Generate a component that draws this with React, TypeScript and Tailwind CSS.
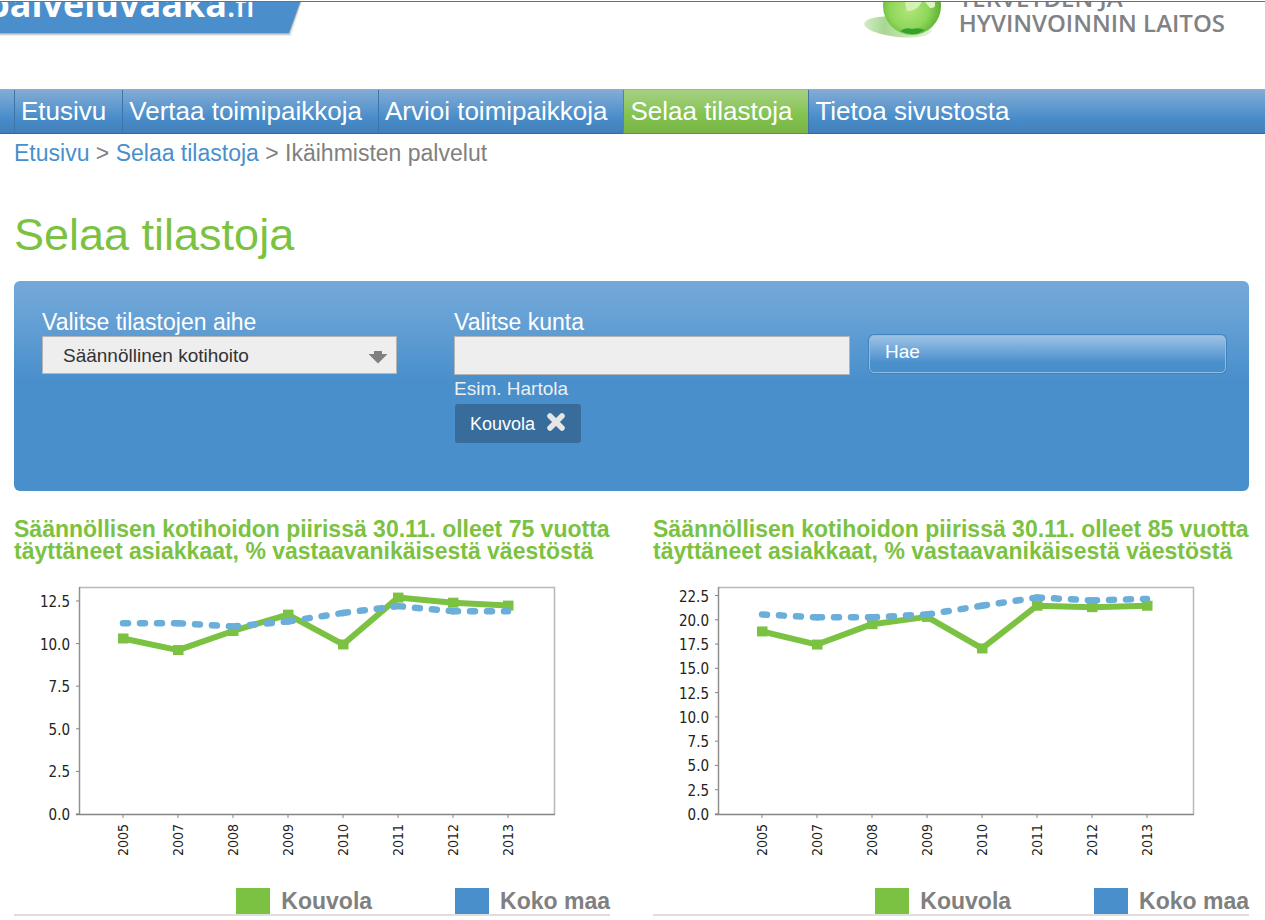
import type { ReactNode } from "react";

const NAV = [
  { label: "Etusivu" },
  { label: "Vertaa toimipaikkoja" },
  { label: "Arvioi toimipaikkoja" },
  { label: "Selaa tilastoja", active: true },
  { label: "Tietoa sivustosta" },
];

const YEARS = ["2005", "2007", "2008", "2009", "2010", "2011", "2012", "2013"];

type ChartData = {
  title: string;
  ticks: number[];
  unit: number;
  kouvola: number[];
  country: number[];
};

const CHARTS: ChartData[] = [
  {
    title:
      "Säännöllisen kotihoidon piirissä 30.11. olleet 75 vuotta täyttäneet asiakkaat, % vastaavanikäisestä väestöstä",
    ticks: [0, 2.5, 5, 7.5, 10, 12.5],
    unit: 17.04,
    kouvola: [10.3, 9.62, 10.74, 11.7, 9.95, 12.7, 12.4, 12.23],
    country: [11.2, 11.2, 11, 11.3, 11.8, 12.2, 11.9, 11.9],
  },
  {
    title:
      "Säännöllisen kotihoidon piirissä 30.11. olleet 85 vuotta täyttäneet asiakkaat, % vastaavanikäisestä väestöstä",
    ticks: [0, 2.5, 5, 7.5, 10, 12.5, 15, 17.5, 20, 22.5],
    unit: 9.71,
    kouvola: [18.8, 17.45, 19.55, 20.3, 17.05, 21.45, 21.3, 21.45],
    country: [20.55, 20.25, 20.25, 20.55, 21.45, 22.3, 22, 22.15],
  },
];

const BASE = 236;
const xAt = (i: number) => 109 + i * 55;

function LineChart({ data }: { data: ChartData }) {
  const yAt = (v: number) => BASE - v * data.unit;
  return (
    <svg
      viewBox="0 0 596 290"
      role="img"
      aria-label={data.title}
      className="mt-4 block w-full font-['DejaVu_Sans_Condensed','DejaVu_Sans',sans-serif]"
    >
      <path d="M65 9.5H540.5V236" fill="none" stroke="#b9b9b9" strokeWidth="1.5" />
      <path d="M65.5 9V236" fill="none" stroke="#909090" strokeWidth="1.5" />
      <path d="M62 236.5H541" fill="none" stroke="#858585" strokeWidth="1.5" />
      {data.ticks.map((t) => (
        <g key={t}>
          <path d={`M62 ${yAt(t)}H65`} stroke="#858585" />
          <text x="56" y={yAt(t) + 6} textAnchor="end" fill="#222" className="text-[15px]">
            {t.toFixed(1)}
          </text>
        </g>
      ))}
      {YEARS.map((year, i) => (
        <g key={year}>
          <path d={`M${xAt(i)} 237v3`} stroke="#858585" />
          <text
            transform={`translate(${xAt(i) + 5} 278) rotate(-90)`}
            fill="#222"
            className="text-[14px]"
          >
            {year}
          </text>
        </g>
      ))}
      <polyline
        points={data.kouvola.map((v, i) => `${xAt(i)},${yAt(v)}`).join(" ")}
        fill="none"
        stroke="#7cc242"
        strokeWidth="6"
        strokeLinejoin="round"
      />
      {data.kouvola.map((v, i) => (
        <rect
          key={i}
          x={xAt(i) - 5}
          y={yAt(v) - 5}
          width="10.5"
          height="10"
          fill="#7cc242"
        />
      ))}
      {data.country.slice(1).map((v, i) => (
        <path
          key={i}
          d={`M${xAt(i)} ${yAt(data.country[i])}L${xAt(i + 1)} ${yAt(v)}`}
          stroke="#6baed9"
          strokeWidth="6.5"
          strokeLinecap="round"
          strokeDasharray="5 12"
        />
      ))}
    </svg>
  );
}

function LegendItem({ swatch, children }: { swatch: string; children: ReactNode }) {
  return (
    <li className="flex items-center gap-[11px]">
      <span className={`h-[26px] w-[34px] ${swatch}`} />
      {children}
    </li>
  );
}

function ThlLogo() {
  return (
    <svg viewBox="0 0 84 44" className="h-[44px] w-[84px] shrink-0" aria-hidden="true">
      <defs>
        <radialGradient id="ball" cx="0.45" cy="0.55" r="0.55">
          <stop offset="0" stopColor="#b2e67c" />
          <stop offset="0.6" stopColor="#8fd75a" />
          <stop offset="1" stopColor="#5cb033" />
        </radialGradient>
        <linearGradient id="shade" x1="0" x2="1">
          <stop offset="0" stopColor="#d3ecc4" />
          <stop offset="0.3" stopColor="#a8d792" />
          <stop offset="1" stopColor="#e4f3d9" />
        </linearGradient>
      </defs>
      <ellipse cx="35" cy="25" rx="34" ry="10" fill="url(#shade)" transform="rotate(6 35 25)" />
      <circle cx="49" cy="4" r="29" fill="url(#ball)" />
      <path d="M42 0l2 9q8 0 12-5l3-4z" fill="#d5f1b4" />
      <path d="M62 0l5 6q4 0 5-2V0z" fill="#dcf4c2" />
      <path d="M37 29q6-4 12-2 7-2 13 1-12 8-25 1z" fill="#35a030" />
    </svg>
  );
}

export default function App() {
  return (
    <div className="min-h-screen bg-white font-['Liberation_Sans',Arial,sans-serif] text-[23px] text-[#808080]">
      <header className="mt-px flex h-[88px] items-start justify-between overflow-hidden border-t border-[#6f6f6f] pr-10">
        <a
          href="#"
          className="relative block h-[38px] w-[304px] font-['Open_Sans',sans-serif] text-[36px] leading-[36px] font-bold text-white"
        >
          <svg viewBox="0 0 304 38" className="absolute inset-0" aria-hidden="true">
            <path d="M0 0H302L291 34H0z" fill="#000" opacity="0.07" />
            <path d="M0 0H301L290 33H0z" fill="#000" opacity="0.12" />
            <path d="M0 0H301L289 32H0z" fill="#000" opacity="0.15" />
            <path d="M0 0H300L289 31H0z" fill="#4a8fcc" />
          </svg>
          <span className="absolute -top-4 -left-[13px] whitespace-nowrap">
            palveluvaaka<span className="text-[30px] font-semibold">.fi</span>
          </span>
        </a>
        <div className="flex items-start gap-3">
          <ThlLogo />
          <p className="-mt-[17px] font-['Open_Sans',sans-serif] text-[24px] leading-[25px] font-semibold text-[#808285]">
            TERVEYDEN JA
            <br />
            HYVINVOINNIN LAITOS
          </p>
        </div>
      </header>

      <nav className="border-t border-b border-t-[#8db0d2] border-b-[#33699d] bg-linear-to-b from-[#82acd4] via-[#488dca] via-65% to-[#427fb9] pl-[14px]">
        <ul className="flex text-[26px] leading-[43px] text-white">
          {NAV.map((item) => (
            <li
              key={item.label}
              className={
                item.active
                  ? "-mb-px border-b border-l border-b-[#5f9435] border-l-[#5f8f52] bg-linear-to-b from-[#a7d083] via-[#82c34d] via-60% to-[#79b447]"
                  : "border-l border-[#3d74a9]"
              }
            >
              <a
                href="#"
                aria-current={item.active ? "page" : undefined}
                className="block pr-4 pl-[6px] whitespace-nowrap"
              >
                {item.label}
              </a>
            </li>
          ))}
        </ul>
      </nav>

      <main className="pr-4 pl-[14px]">
        <p className="pt-[5px] leading-7">
          <a href="#" className="text-[#488fcd]">Etusivu</a> &gt;{" "}
          <a href="#" className="text-[#488fcd]">Selaa tilastoja</a> &gt; Ikäihmisten palvelut
        </p>

        <h1 className="mt-[42px] text-[45px] leading-[52px] text-[#7cc242]">Selaa tilastoja</h1>

        <form
          onSubmit={(e) => e.preventDefault()}
          className="mt-5 grid min-h-[210px] grid-cols-[412fr_415fr_357fr] rounded-md bg-[#488fcc] bg-[linear-gradient(#74a8d9,#6aa3d6_28px,#488fcc_100px)] pt-[27px] pr-[23px] pl-7 text-white"
        >
          <div className="pr-[57px]">
            <label htmlFor="topic" className="block leading-7">Valitse tilastojen aihe</label>
            <div className="relative">
              <select
                id="topic"
                className="block h-[38px] w-full appearance-none border border-[#b5b5b5] bg-[#eee] pt-0.5 pl-5 text-[19px] text-[#333]"
              >
                <option>Säännöllinen kotihoito</option>
              </select>
              <svg
                viewBox="0 0 20 14"
                className="pointer-events-none absolute top-[14px] right-[9px] h-[14px] w-5"
                aria-hidden="true"
              >
                <path d="M6 1h8v3h5.500L10 13.500.5 4H6z" fill="#808080" />
              </svg>
            </div>
          </div>

          <div className="pr-[19px]">
            <label htmlFor="town" className="block leading-7">Valitse kunta</label>
            <input
              id="town"
              type="text"
              className="block h-[39px] w-full border border-[#b5b5b5] bg-[#eee] px-3 text-[19px] text-[#333]"
            />
            <p className="text-[19px] leading-7 text-[#eee]">Esim. Hartola</p>
            <div className="mt-px ml-px inline-flex h-[39px] items-center gap-[11px] rounded-[3px] bg-[#386c9b] px-[15px] pt-0.5 text-[18px]">
              Kouvola
              <button type="button" aria-label="Poista Kouvola">
                <svg viewBox="0 0 20 20" className="mb-1.5 block size-5" aria-hidden="true">
                  <path
                    d="M4 4l12 12M16 4L4 16"
                    stroke="#e6e6e6"
                    strokeWidth="5.5"
                    strokeLinecap="round"
                  />
                </svg>
              </button>
            </div>
          </div>

          <div className="pt-[27px]">
            <button
              type="submit"
              className="block h-[38px] w-full rounded-[5px] border border-[#8fbce3] bg-linear-to-b from-[#9cc2e5] via-[#488fcc] via-75% to-[#488fcc] px-[15px] pb-1 text-left text-[19px] ring-1 ring-[#4383bd]"
            >
              Hae
            </button>
          </div>
        </form>

        <div className="mt-[27px] grid grid-cols-2 gap-[43px]">
          {CHARTS.map((chart) => (
            <section key={chart.title} className="border-b-2 border-[#dedede]">
              <h2 className="leading-[22px] font-bold text-[#7cc242]">{chart.title}</h2>
              <LineChart data={chart} />
              <ul className="mt-5 flex justify-end gap-[83px] leading-[26px] font-bold">
                <LegendItem swatch="bg-[#7cc242]">Kouvola</LegendItem>
                <LegendItem swatch="bg-[#488fcc]">Koko maa</LegendItem>
              </ul>
            </section>
          ))}
        </div>
      </main>
    </div>
  );
}
